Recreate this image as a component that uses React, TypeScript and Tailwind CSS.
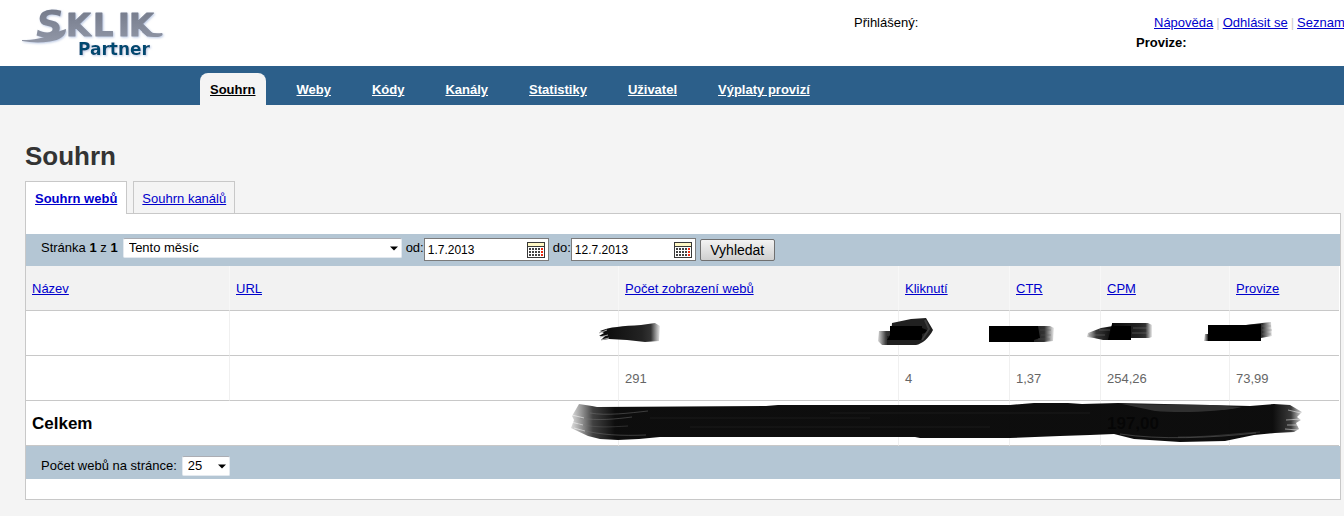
import type { ReactNode } from "react";

const navItems = ["Souhrn", "Weby", "Kódy", "Kanály", "Statistiky", "Uživatel", "Výplaty provizí"];

const linkClass = "text-[#0000cc] underline";

function Logo() {
  return (
    <svg className="block h-[66px] w-[190px]" viewBox="0 0 190 66" role="img" aria-label="Sklik Partner">
      <defs>
        <linearGradient id="logo-grey" gradientUnits="userSpaceOnUse" x1="0" y1="8" x2="0" y2="44">
          <stop offset="0" stopColor="#747a8a" />
          <stop offset="1" stopColor="#9298a8" />
        </linearGradient>
        <filter id="logo-shadow" x="-10%" y="-10%" width="120%" height="130%">
          <feDropShadow dx="1" dy="1" stdDeviation="1" floodColor="#9fb2d8" floodOpacity="0.7" />
        </filter>
      </defs>
      <g
        fill="url(#logo-grey)"
        fontFamily="DejaVu Sans, sans-serif"
        fontWeight="700"
        filter="url(#logo-shadow)"
      >
        <path d="M22 40 C34 40 44 38 51 34 L66 29 C66 36 60 40 50 41.500 C40 43 30 42.500 22 41 Z" />
        <text x="36" y="37" fontSize="38" fontStyle="italic">
          S
        </text>
        <text x="66 93 118 129" y="36" fontSize="32" stroke="url(#logo-grey)" strokeLinejoin="round">
          KLIK
        </text>
        <path d="M144 28 C149 33 155 34 162 33 C164 35 161 37 156 37 C150 37 146 36 142 32 Z" />
      </g>
      <text
        x="78"
        y="55"
        fill="#00496f"
        fontFamily="DejaVu Sans, sans-serif"
        fontSize="17"
        fontWeight="700"
        filter="url(#logo-shadow)"
      >
        Partner
      </text>
    </svg>
  );
}

function CalendarIcon() {
  return (
    <svg className="block h-4 w-[18px]" viewBox="0 0 18 16" shapeRendering="crispEdges" aria-hidden="true">
      <rect width="18" height="16" fill="#383838" />
      <rect x="1" y="1" width="16" height="3" fill="#fff7c4" />
      <rect x="1" y="5" width="16" height="10" fill="#fff" />
      {[6, 9, 12].map((y) =>
        [2, 5, 8, 11, 14].map((x) => (
          <rect key={`${x}-${y}`} x={x} y={y} width="2" height="2" fill={x === 14 ? "#f02a10" : "#444"} />
        ))
      )}
    </svg>
  );
}

function Select({ label, value, width }: { label: string; value: string; width: string }) {
  return (
    <span className={`relative inline-flex ${width}`}>
      <select
        aria-label={label}
        defaultValue={value}
        className="h-5 w-full appearance-none rounded-xs border border-[#e3e9ef] border-t-[#abadb3] bg-white pl-[5px] text-[13px] leading-4 text-black"
      >
        <option>{value}</option>
      </select>
      <svg className="pointer-events-none absolute right-1 top-2 h-[5px] w-2" viewBox="0 0 8 5" aria-hidden="true">
        <path d="M0 0.500 H8 L4 4.500 Z" fill="#000" />
      </svg>
    </span>
  );
}

function DateField({ id, label, value }: { id: string; label: string; value: string }) {
  return (
    <div className="flex">
      <label htmlFor={id}>{label}</label>
      <span className="flex h-[23px] w-[125px] items-center border border-[#7b7b7b] bg-white pr-[3px]">
        <input id={id} defaultValue={value} className="w-full min-w-0 flex-1 pl-[3px] text-xs text-black outline-none" />
        <button type="button" aria-label={`Kalendář ${label}`}>
          <CalendarIcon />
        </button>
      </span>
    </div>
  );
}

function BrushDefs() {
  return (
    <svg className="absolute h-0 w-0" aria-hidden="true">
      <defs>
        <linearGradient id="fade-right">
          <stop offset="0" stopColor="#080808" />
          <stop offset="0.7" stopColor="#1c1c1c" stopOpacity="0.97" />
          <stop offset="0.85" stopColor="#333" />
          <stop offset="1" stopColor="#333" stopOpacity="0.1" />
        </linearGradient>
        <linearGradient id="fade-left">
          <stop offset="0" stopColor="#333" stopOpacity="0.2" />
          <stop offset="0.35" stopColor="#222" stopOpacity="0.9" />
          <stop offset="1" stopColor="#080808" />
        </linearGradient>
        <linearGradient id="fade-both">
          <stop offset="0" stopColor="#222" stopOpacity="0.15" />
          <stop offset="0.03" stopColor="#111" stopOpacity="0.8" />
          <stop offset="0.06" stopColor="#060606" stopOpacity="0.97" />
          <stop offset="0.96" stopColor="#060606" stopOpacity="0.97" />
          <stop offset="0.985" stopColor="#161616" stopOpacity="0.85" />
          <stop offset="1" stopColor="#333" stopOpacity="0.2" />
        </linearGradient>
      </defs>
    </svg>
  );
}

function Mark({ children }: { children: ReactNode }) {
  return (
    <svg className="pointer-events-none absolute -left-8 top-0 h-11 w-24" viewBox="0 0 96 44" aria-hidden="true">
      {children}
    </svg>
  );
}

const marks = [
  <Mark key="views">
    <path d="M13 20 C22 16 36 15 54 14 L68 12 L73 15 L72 30 L58 31 L40 29 L22 28 L14 29 L18 25 L12 25 L17 22 Z" fill="url(#fade-right)" />
    <path d="M12 22 L20 19 M13 26 L21 24 M14 29 L22 27" stroke="#aaa" />
  </Mark>,
  <Mark key="clicks">
    <path d="M12 20 H34 V34 H15 L11 30 Z" fill="url(#fade-left)" />
    <path d="M25 12 L44 8 L59 7 L66 19 C62 27 55 33 49 34 H20 V25 H24 Z" fill="#202020" />
    <path d="M23 15 H55 V17 L60 19 V21 L55 23 V29 H20 L23 24 Z" fill="#000" />
    <path d="M58 9 L62 18 L55 29" stroke="#3d3d3d" strokeWidth="2" fill="none" />
  </Mark>,
  <Mark key="ctr">
    <path d="M11 15 H72 L76 17 L75 30 L66 31 H11 Z" fill="url(#fade-right)" />
    <path d="M11 15 H60 L62 27 L56 29 V31 H11 Z" fill="#000" />
    <path d="M62 19 H73 M63 24 H73 M60 28 H72" stroke="#555" strokeOpacity="0.4" />
  </Mark>,
  <Mark key="cpm">
    <path d="M19 22 L32 17 L44 15 V29 H34 L25 27 L18 26 Z" fill="url(#fade-left)" />
    <path d="M43 12 H79 L83 14 V26 L80 27 H62 V29 H39 L43 18 Z" fill="url(#fade-right)" />
    <path d="M43 13 L45 15 H62 V29 H39 Z" fill="#000" />
    <path d="M20 24 H36 M30 19 H41 M64 17 H79 M63 22 H80" stroke="#777" strokeOpacity="0.5" />
  </Mark>,
  <Mark key="provision">
    <path d="M7 23 H16 V30 H6 Z" fill="url(#fade-left)" />
    <path d="M10 14 H48 L64 12 L73 11 L74 25 L63 27 V30 H10 Z" fill="url(#fade-right)" />
    <path d="M10 14 H48 L63 13 V30 H10 Z" fill="#000" />
    <path d="M64 15 H73 M64 19 H74 M64 23 H73" stroke="#777" strokeOpacity="0.4" />
  </Mark>,
];

function TotalMark() {
  return (
    <svg
      className="pointer-events-none absolute right-[33px] top-0 h-11 w-[736px]"
      viewBox="0 0 736 44"
      aria-hidden="true"
    >
      <path
        d="M9 3 L22 5 L27 6 L196 5 L208 4 L440 4 L464 2 L498 2 L512 3 L548 2 L640 4 L680 5 L704 3 L720 4 L732 11 L727 16 L731 19 L726 22 L729 28 L724 31 L705 32 L684 34 L655 40 L610 41 L564 38 L544 33 L520 34 L490 35 L440 37 L350 37 L345 36 L90 36 L69 38 L48 39 L30 38 L18 35 L1 27 L4 19 L2 15 Z"
        fill="url(#fade-both)"
      />
      <path d="M552 3 L640 4 L672 6 C650 11 610 12 585 10 Z" fill="#3a3a3a" fillOpacity="0.8" />
      <g fill="none" stroke="#777" strokeOpacity="0.45">
        <path d="M20 12 C36 15 60 12 78 10" />
        <path d="M10 17 C28 20 46 18 62 16" />
        <path d="M8 23 C26 27 40 26 58 25" strokeOpacity="0.3" />
        <path d="M12 29 C30 34 52 35 76 34" />
        <path d="M80 17 H300 M120 26 H420 M260 12 H520" strokeOpacity="0.12" />
        <path d="M550 33 C590 39 640 37 686 32" />
        <path d="M608 36 C640 36 660 33 690 31" strokeOpacity="0.3" />
      </g>
      <g fill="none" stroke="#fff" strokeOpacity="0.5">
        <path d="M2 14 L14 17 M1 21 L13 24 M4 27 L15 30 M718 9 L731 12 M716 19 L731 18 M717 24 L730 24 M715 28 L728 29" />
      </g>
    </svg>
  );
}

const columns = [
  { label: "Název", width: "w-[204px]" },
  { label: "URL", width: "" },
  { label: "Počet zobrazení webů", width: "w-[280px]" },
  { label: "Kliknutí", width: "w-[111px]" },
  { label: "CTR", width: "w-[91px]" },
  { label: "CPM", width: "w-[129px]" },
  { label: "Provize", width: "w-[109px]" },
];

const cellClass =
  "relative border-b border-r border-b-[#c8c8c8] border-r-[#f0f0f0] px-1.5 pt-0.5 text-left last:border-r-0";

function SitesTable() {
  return (
    <table className="w-full table-fixed border-separate border-spacing-0">
      <thead>
        <tr className="h-[45px] bg-[#f2f2f2]">
          {columns.map(({ label, width }) => (
            <th
              key={label}
              className={`border-b border-r border-b-[#c8c8c8] border-r-[#f7f7f7] px-1.5 pt-0.5 text-left font-normal last:border-r-0 ${width}`}
            >
              <a href="#" className={linkClass}>
                {label}
              </a>
            </th>
          ))}
        </tr>
      </thead>
      <tbody className="text-[#666]">
        <tr className="h-[45px]">
          {["", "", ...marks].map((mark, i) => (
            <td key={i} className={cellClass}>
              {mark}
            </td>
          ))}
        </tr>
        <tr className="h-[45px]">
          {["", "", "291", "4", "1,37", "254,26", "73,99"].map((value, i) => (
            <td key={i} className={cellClass}>
              {value}
            </td>
          ))}
        </tr>
        <tr className="h-[45px] text-[17px] font-bold text-black">
          <th scope="row" colSpan={2} className={cellClass}>
            Celkem
          </th>
          {["", "", "", "197,00", ""].map((value, i) => (
            <td key={i} className={cellClass}>
              {value}
              {i === 4 && <TotalMark />}
            </td>
          ))}
        </tr>
      </tbody>
    </table>
  );
}

export default function App() {
  return (
    <div className="min-h-screen overflow-x-hidden bg-[#f4f4f4] font-['Liberation_Sans',Arial,sans-serif] text-[13px] leading-5 text-black">
      <BrushDefs />
      <header className="flex h-[66px] justify-between bg-white">
        <Logo />
        <div className="w-[490px] overflow-hidden whitespace-nowrap pt-[13px]">
          <div className="flex">
            <span className="w-[300px] shrink-0">Přihlášený:</span>
            <div className="flex gap-[3px]">
              <a href="#" className={linkClass}>Nápověda</a>
              <span className="text-[#ccc]">|</span>
              <a href="#" className={linkClass}>Odhlásit se</a>
              <span className="text-[#ccc]">|</span>
              <a href="#" className={linkClass}>Seznam</a>
            </div>
          </div>
          <div className="pl-[282px] font-bold">Provize:</div>
        </div>
      </header>

      <nav className="flex h-[39px] items-end gap-[21px] bg-[#2c5f8a] pl-[200px] font-bold">
        {navItems.map((item, i) => (
          <a
            key={item}
            href="#"
            className={`flex h-8 items-center px-2.5 pt-0.5 underline ${i === 0 ? "rounded-t-lg bg-[#f4f4f4] text-black" : "text-white"}`}
          >
            {item}
          </a>
        ))}
      </nav>

      <main className="pb-4 pl-[25px] pr-[3px] pt-9">
        <h1 className="text-[26px] font-bold leading-[30px] text-[#333]">Souhrn</h1>

        <div className="mt-2.5 flex gap-1.5">
          <a
            href="#"
            className={`z-10 -mb-px flex h-[33px] items-center border border-b-0 border-[#c8c8c8] bg-white px-[9px] pt-0.5 font-bold ${linkClass}`}
          >
            Souhrn webů
          </a>
          <a
            href="#"
            className={`flex h-8 items-center border border-b-0 border-[#c8c8c8] px-2 pt-0.5 ${linkClass}`}
          >
            Souhrn kanálů
          </a>
        </div>

        <section className="border border-[#c8c8c8] bg-white py-5">
          <form className="flex h-8 items-start gap-1 bg-[#b4c6d4] pl-[15px] pt-1" onSubmit={(e) => e.preventDefault()}>
            <span className="mr-px">
              Stránka <b>1</b> z <b>1</b>
            </span>
            <Select label="Období" value="Tento měsíc" width="w-[279px]" />
            <DateField id="date-from" label="od:" value="1.7.2013" />
            <DateField id="date-to" label="do:" value="12.7.2013" />
            <button
              type="submit"
              className="mt-px h-[22px] w-[75px] rounded-xs border border-[#707070] bg-linear-to-b from-[#f3f3f3] to-[#cfcfcf] text-sm leading-5"
            >
              Vyhledat
            </button>
          </form>

          <div className="pr-px">
            <SitesTable />
          </div>

          <div className="flex h-[33px] items-center gap-[5px] bg-[#b4c6d4] pl-[15px] pt-1.5">
            <span>Počet webů na stránce:</span>
            <Select label="Počet webů na stránce" value="25" width="w-12" />
          </div>
        </section>
      </main>
    </div>
  );
}
